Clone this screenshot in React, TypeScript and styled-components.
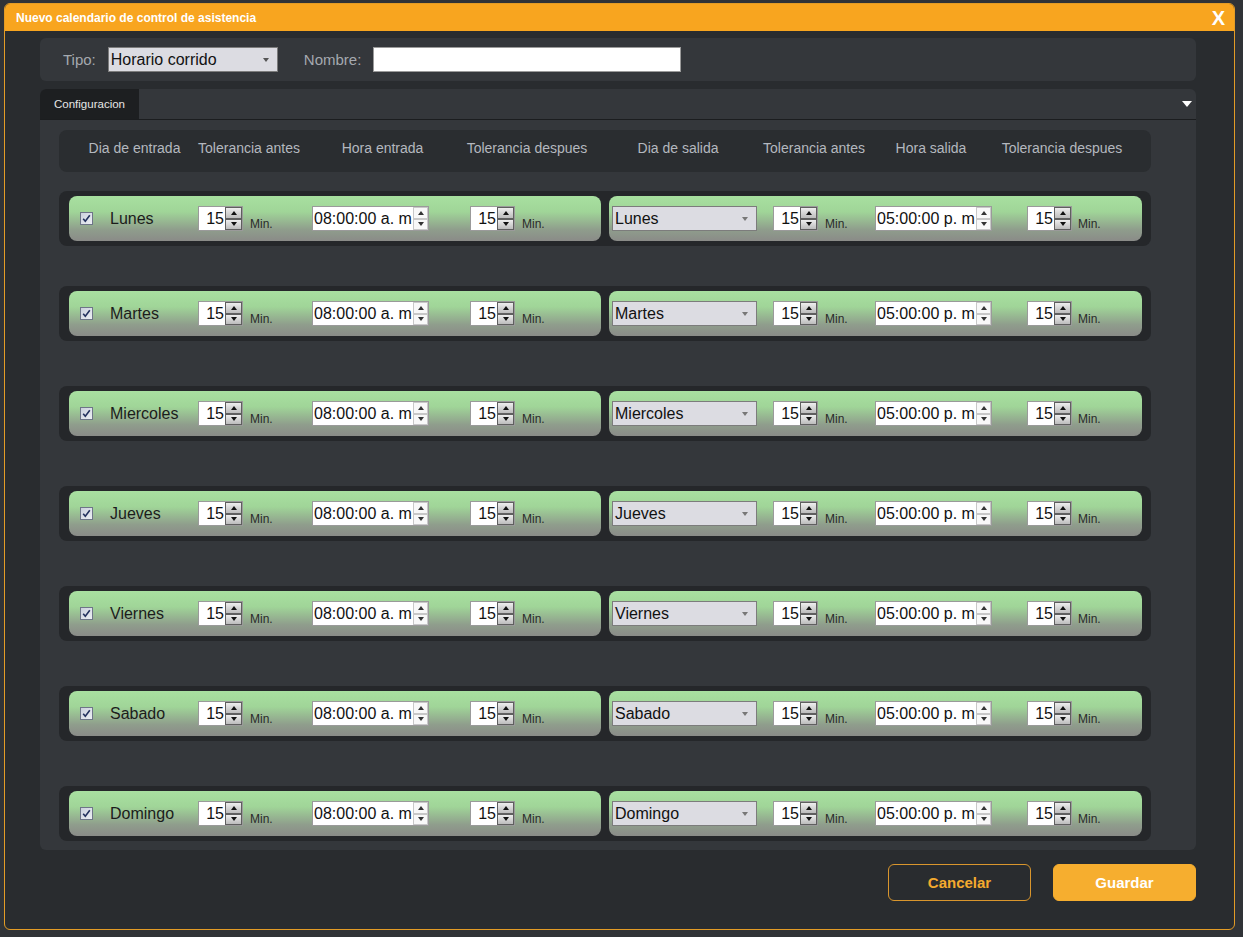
import styled, { createGlobalStyle } from 'styled-components'

const GlobalStyle = createGlobalStyle`
  html, body {
    margin: 0;
    padding: 0;
    background: #303337;
  }
  body {
    font-family: "Liberation Sans", Arial, sans-serif;
  }
`

const Ventana = styled.div`
  margin: 3px 8px 7px 4px;
  width: 1231px;
  height: 927px;
  box-sizing: border-box;
  border: 1px solid #e39c26;
  border-radius: 6px;
  background: #292c2f;
  display: flex;
  flex-direction: column;
  overflow: hidden;
`

const BarraTitulo = styled.div`
  height: 27px;
  background: #f8a51f;
  display: flex;
  align-items: center;
  justify-content: space-between;
  padding: 0 9px 0 11px;
`

const Titulo = styled.span`
  color: #fff;
  font-size: 12px;
  font-weight: bold;
`

const Cerrar = styled.span`
  color: #fff;
  font-size: 20px;
  font-weight: bold;
  line-height: 21px;
  margin-top: 2px;
`

const Cuerpo = styled.div`
  padding: 7px 38px 0 35px;
  display: flex;
  flex-direction: column;
`

const PanelTipo = styled.div`
  height: 43px;
  border-radius: 6px;
  background: #34373b;
  display: flex;
  align-items: center;
  padding-left: 23px;
`

const Etiqueta = styled.span<{ $ml?: number }>`
  color: #a5a9af;
  font-size: 15px;
  margin-left: ${p => p.$ml ?? 0}px;
  margin-right: 12px;
`

const Selector = styled.div<{ $w: number }>`
  width: ${p => p.$w}px;
  height: 25px;
  box-sizing: border-box;
  background: #dcdce2;
  border: 1px solid #7c7c7c;
  display: flex;
  align-items: center;
  justify-content: space-between;
  padding: 0 8px 0 2px;
  font-size: 16px;
  color: #111;
`

const CampoTexto = styled.div`
  width: 308px;
  height: 25px;
  box-sizing: border-box;
  background: #fff;
  border: 1px solid #9a9a9a;
`

const BarraPestanas = styled.div`
  margin-top: 8px;
  height: 31px;
  box-sizing: border-box;
  background: #34373b;
  border-radius: 6px 6px 0 0;
  border-bottom: 1px solid #1b1d1f;
  display: flex;
  align-items: stretch;
  justify-content: space-between;
`

const Pestana = styled.div`
  width: 99px;
  background: #1d1f21;
  border-radius: 6px 0 0 0;
  color: #e6e6e6;
  font-size: 11.5px;
  display: flex;
  align-items: center;
  justify-content: center;
`

const FlechaPestana = styled.div`
  display: flex;
  align-items: center;
  margin-right: 4px;
`

const Contenido = styled.div`
  height: 730px;
  box-sizing: border-box;
  background: #34373b;
  border-radius: 0 0 6px 6px;
  padding: 10px 45px 0 19px;
`

const Encabezado = styled.div`
  height: 42px;
  box-sizing: border-box;
  padding-bottom: 6px;
  border-radius: 8px;
  background: #2a2d30;
  display: grid;
  grid-template-columns: 151px 78px 189px 100px 202px 70px 164px 98px;
  align-items: center;
`

const CeldaEncabezado = styled.div`
  display: flex;
  justify-content: center;
  white-space: nowrap;
  color: #b4b8bf;
  font-size: 14px;
`

const FilaDia = styled.div<{ $top: number }>`
  margin-top: ${p => p.$top}px;
  height: 55px;
  box-sizing: border-box;
  border-radius: 8px;
  background: #25272a;
  display: flex;
  gap: 8px;
  padding: 5px 9px 5px 10px;
`

const PanelVerde = styled.div<{ $w: number; $pl: number }>`
  width: ${p => p.$w}px;
  height: 45px;
  box-sizing: border-box;
  border-radius: 8px;
  background: linear-gradient(180deg, #a8e0a0 0%, #a0d598 35%, #8f9d8c 75%, #8a8b88 100%);
  display: flex;
  align-items: center;
  padding-left: ${p => p.$pl}px;
`

const NombreDia = styled.span`
  width: 88px;
  margin-left: 17px;
  font-size: 16px;
  color: #1c1c1c;
`

const Minutos = styled.span<{ $w: number; $ml: number }>`
  width: ${p => p.$w}px;
  margin-left: ${p => p.$ml}px;
  margin-top: 10px;
  font-size: 12px;
  color: #2a2a2a;
`

const CajaNumero = styled.div<{ $w: number; $ml?: number }>`
  width: ${p => p.$w}px;
  margin-left: ${p => p.$ml ?? 0}px;
  height: 25px;
  box-sizing: border-box;
  background: #fff;
  border: 1px solid #9a9a9a;
  display: flex;
`

const ValorNumero = styled.span<{ $left?: boolean }>`
  flex: 1;
  text-align: ${p => (p.$left ? 'left' : 'right')};
  font-size: 16px;
  line-height: 23px;
  color: #111;
  padding: 0 1px;
  white-space: nowrap;
  overflow: hidden;
`

const ColumnaGiro = styled.div<{ $w: number }>`
  width: ${p => p.$w}px;
  display: flex;
  flex-direction: column;
`

const BotonGiro = styled.div<{ $claro?: boolean }>`
  flex: 1;
  box-sizing: border-box;
  border: 1px solid ${p => (p.$claro ? '#c8c8c8' : '#5f5f5f')};
  background: ${p => (p.$claro ? '#f8f8f8' : 'linear-gradient(180deg, #eeeeee, #bcbcbc)')};
  display: flex;
  align-items: center;
  justify-content: center;
`

const CasillaCaja = styled.div`
  width: 13px;
  height: 13px;
  display: flex;
`

const PieBotones = styled.div`
  margin-top: 14px;
  display: flex;
  justify-content: flex-end;
  gap: 22px;
`

const Boton = styled.div<{ $primario?: boolean }>`
  width: 143px;
  height: 37px;
  box-sizing: border-box;
  border-radius: 6px;
  border: 1px solid ${p => (p.$primario ? '#f6ae2f' : '#d9962d')};
  background: ${p => (p.$primario ? '#f6ae2f' : 'transparent')};
  color: ${p => (p.$primario ? '#fff' : '#f4aa2e')};
  font-size: 15px;
  font-weight: bold;
  display: flex;
  align-items: center;
  justify-content: center;
`

function Triangulo({ arriba, color = '#111' }: { arriba: boolean; color?: string }) {
  return (
    <svg width="6" height="4" viewBox="0 0 6 4">
      <path d={arriba ? 'M0 4 L3 0 L6 4 Z' : 'M0 0 L3 4 L6 0 Z'} fill={color} />
    </svg>
  )
}

function Numero({ valor, ml }: { valor: string; ml?: number }) {
  return (
    <CajaNumero $w={45} $ml={ml}>
      <ValorNumero>{valor}</ValorNumero>
      <ColumnaGiro $w={17}>
        <BotonGiro><Triangulo arriba /></BotonGiro>
        <BotonGiro><Triangulo arriba={false} /></BotonGiro>
      </ColumnaGiro>
    </CajaNumero>
  )
}

function Hora({ valor, ml }: { valor: string; ml?: number }) {
  return (
    <CajaNumero $w={117} $ml={ml}>
      <ValorNumero $left>{valor}</ValorNumero>
      <ColumnaGiro $w={15}>
        <BotonGiro $claro><Triangulo arriba color="#333" /></BotonGiro>
        <BotonGiro $claro><Triangulo arriba={false} color="#333" /></BotonGiro>
      </ColumnaGiro>
    </CajaNumero>
  )
}

function Casilla() {
  return (
    <CasillaCaja>
      <svg width="13" height="13" viewBox="0 0 13 13">
        <defs>
          <linearGradient id="cb" x1="0" y1="0" x2="1" y2="1">
            <stop offset="0" stopColor="#c9cfdc" />
            <stop offset="1" stopColor="#eef0f5" />
          </linearGradient>
        </defs>
        <rect x="0.5" y="0.5" width="12" height="12" fill="url(#cb)" stroke="#6e7588" />
        <path d="M3.2 6.8 L5.3 9.3 L9.8 3.3" fill="none" stroke="#23315e" strokeWidth="1.6" />
      </svg>
    </CasillaCaja>
  )
}

function Caret({ color = '#666' }: { color?: string }) {
  return (
    <svg width="6" height="4" viewBox="0 0 6 4">
      <path d="M0 0 L6 0 L3 4 Z" fill={color} />
    </svg>
  )
}

const dias = ['Lunes', 'Martes', 'Miercoles', 'Jueves', 'Viernes', 'Sabado', 'Domingo']
const margenes = [19, 40, 45, 45, 45, 45, 45]
const columnas = [
  'Dia de entrada',
  'Tolerancia antes',
  'Hora entrada',
  'Tolerancia despues',
  'Dia de salida',
  'Tolerancia antes',
  'Hora salida',
  'Tolerancia despues',
]

export default function App() {
  return (
    <>
      <GlobalStyle />
      <Ventana>
        <BarraTitulo>
          <Titulo>Nuevo calendario de control de asistencia</Titulo>
          <Cerrar>X</Cerrar>
        </BarraTitulo>
        <Cuerpo>
          <PanelTipo>
            <Etiqueta>Tipo:</Etiqueta>
            <Selector $w={170}>
              <span>Horario corrido</span>
              <Caret color="#555" />
            </Selector>
            <Etiqueta $ml={26}>Nombre:</Etiqueta>
            <CampoTexto />
          </PanelTipo>

          <BarraPestanas>
            <Pestana>Configuracion</Pestana>
            <FlechaPestana>
              <svg width="10" height="6" viewBox="0 0 10 6">
                <path d="M0 0 L10 0 L5 6 Z" fill="#fff" />
              </svg>
            </FlechaPestana>
          </BarraPestanas>

          <Contenido>
            <Encabezado>
              {columnas.map((c, i) => (
                <CeldaEncabezado key={i}>{c}</CeldaEncabezado>
              ))}
            </Encabezado>

            {dias.map((dia, i) => (
              <FilaDia key={dia} $top={margenes[i]}>
                <PanelVerde $w={532} $pl={11}>
                  <Casilla />
                  <NombreDia>{dia}</NombreDia>
                  <Numero valor="15" />
                  <Minutos $w={62} $ml={7}>Min.</Minutos>
                  <Hora valor="08:00:00 a. m" />
                  <Numero valor="15" ml={41} />
                  <Minutos $w={40} $ml={7}>Min.</Minutos>
                </PanelVerde>
                <PanelVerde $w={533} $pl={3}>
                  <Selector $w={145}>
                    <span>{dia}</span>
                    <Caret color="#777" />
                  </Selector>
                  <Numero valor="15" ml={16} />
                  <Minutos $w={50} $ml={7}>Min.</Minutos>
                  <Hora valor="05:00:00 p. m" />
                  <Numero valor="15" ml={35} />
                  <Minutos $w={40} $ml={6}>Min.</Minutos>
                </PanelVerde>
              </FilaDia>
            ))}
          </Contenido>

          <PieBotones>
            <Boton>Cancelar</Boton>
            <Boton $primario>Guardar</Boton>
          </PieBotones>
        </Cuerpo>
      </Ventana>
    </>
  )
}
